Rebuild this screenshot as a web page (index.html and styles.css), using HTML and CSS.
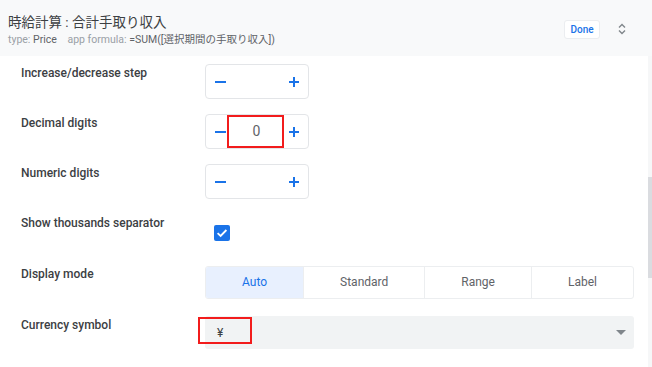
FILE: index.html
```html
<!DOCTYPE html>
<html lang="en">
<head>
    <meta charset="UTF-8">
    <meta name="viewport" content="width=device-width, initial-scale=1.0">
    <title>Column settings</title>
    <link rel="stylesheet" href="styles.css">
</head>
<body>
    <div class="panel">
        <div class="header">
            <div class="title-block">
                <div class="title">時給計算 : 合計手取り収入</div>
                <div class="subtitle">
                    <span class="key">type:</span> <span class="val">Price</span>
                    <span class="key spaced">app formula:</span> <span class="val">=SUM([選択期間の手取り収入])</span>
                </div>
            </div>
            <button class="done-btn" type="button">Done</button>
            <div class="collapse">
                <svg width="8" height="12" viewBox="0 0 8 12">
                    <path d="M1 4.5 L4 1.5 L7 4.5" fill="none" stroke="#80868b" stroke-width="1.4"/>
                    <path d="M1 7.5 L4 10.5 L7 7.5" fill="none" stroke="#80868b" stroke-width="1.4"/>
                </svg>
            </div>
        </div>

        <div class="content">
            <div class="row">
                <div class="label">Increase/decrease step</div>
                <div class="control">
                    <div class="stepper">
                        <span class="minus"></span>
                        <div class="step-input"></div>
                        <span class="plus"></span>
                    </div>
                </div>
            </div>
            <div class="row">
                <div class="label">Decimal digits</div>
                <div class="control">
                    <div class="stepper">
                        <span class="minus"></span>
                        <div class="step-input marked">0</div>
                        <span class="plus"></span>
                    </div>
                </div>
            </div>
            <div class="row">
                <div class="label">Numeric digits</div>
                <div class="control">
                    <div class="stepper">
                        <span class="minus"></span>
                        <div class="step-input"></div>
                        <span class="plus"></span>
                    </div>
                </div>
            </div>
            <div class="row">
                <div class="label">Show thousands separator</div>
                <div class="control check-wrap">
                    <span class="checkbox">
                        <svg width="16" height="16" viewBox="0 0 16 16">
                            <path d="M3.6 8.2 L6.6 11 L12.4 5" fill="none" stroke="#fff" stroke-width="1.8"/>
                        </svg>
                    </span>
                </div>
            </div>
            <div class="row">
                <div class="label">Display mode</div>
                <div class="control">
                    <div class="segments">
                        <div class="seg active">Auto</div>
                        <div class="seg">Standard</div>
                        <div class="seg">Range</div>
                        <div class="seg">Label</div>
                    </div>
                </div>
            </div>
            <div class="row">
                <div class="label">Currency symbol</div>
                <div class="control">
                    <div class="select">
                        <span class="select-value">¥</span>
                        <span class="arrow"></span>
                        <span class="mark-box"></span>
                    </div>
                </div>
            </div>
        </div>

        <div class="scrollbar"><div class="thumb"></div></div>
    </div>
</body>
</html>
```

FILE: styles.css
```css
body {
    margin: 0;
    padding: 0;
    font-family: Roboto, "Noto Sans CJK JP", sans-serif;
    color: #3c4043;
    background-color: #fff;
}
.panel {
    width: 652px;
    height: 367px;
    position: relative;
    overflow: hidden;
}
.header {
    height: 56px;
    background-color: #f8f9fa;
    display: flex;
    align-items: flex-start;
    padding: 0 8px;
    box-sizing: border-box;
}
.title-block {
    flex: 1;
    padding-top: 13px;
}
.title {
    font-size: 13.5px;
    line-height: 18px;
    color: #3c4043;
}
.subtitle {
    font-size: 10.5px;
    line-height: 14px;
    margin-top: 2px;
    white-space: nowrap;
}
.subtitle .key {
    color: #9aa0a6;
}
.subtitle .val {
    color: #5f6368;
}
.subtitle .spaced {
    margin-left: 8px;
}
.done-btn {
    margin-top: 20px;
    width: 36px;
    height: 19px;
    padding: 0;
    border: 1px solid #ebedf0;
    border-radius: 3px;
    background-color: #fff;
    color: #1a73e8;
    font-family: Roboto, sans-serif;
    font-size: 10px;
    font-weight: 500;
    box-sizing: border-box;
}
.collapse {
    width: 16px;
    margin: 23px 14px 0 14px;
    display: flex;
    justify-content: center;
}

.content {
    padding: 8px 18px 0 21px;
}
.row {
    display: flex;
    align-items: flex-start;
    margin-bottom: 15px;
}
.row:nth-child(5) {
    margin-bottom: 17px;
}
.label {
    width: 184px;
    padding-top: 1px;
    font-size: 12px;
    font-weight: 500;
    line-height: 16px;
    color: #3c4043;
    flex-shrink: 0;
}
.control {
    flex: 1;
}

.stepper {
    width: 104px;
    height: 35px;
    border: 1px solid #e3e5e8;
    border-radius: 4px;
    box-sizing: border-box;
    display: flex;
    align-items: center;
    padding: 0 9px;
}
.minus {
    width: 11px;
    height: 2px;
    background-color: #1a73e8;
    margin-right: 1px;
}
.plus {
    width: 10px;
    height: 10px;
    margin-left: 5px;
    position: relative;
}
.plus::before,
.plus::after {
    content: "";
    position: absolute;
    background-color: #1a73e8;
}
.plus::before {
    left: 0;
    top: 4px;
    width: 10px;
    height: 2px;
}
.plus::after {
    left: 4px;
    top: 0;
    width: 2px;
    height: 10px;
}
.step-input {
    width: 57px;
    height: 33px;
    box-sizing: border-box;
    display: flex;
    align-items: center;
    justify-content: center;
    font-size: 14px;
    color: #5f6368;
}
.step-input.marked {
    border: 2px solid #f21c1c;
    height: 33px;
    margin-top: -1px;
    padding-left: 2px;
}

.check-wrap {
    height: 36px;
    padding: 11px 0 0 9px;
    box-sizing: border-box;
}
.checkbox {
    display: block;
    width: 16px;
    height: 16px;
    border-radius: 2px;
    background-color: #1a73e8;
}
.checkbox svg {
    display: block;
}

.segments {
    display: flex;
    height: 33px;
    margin-top: 1px;
    border: 1px solid #eceef0;
    border-radius: 3px;
    box-sizing: border-box;
    overflow: hidden;
}
.seg {
    flex: 1 1 auto;
    display: flex;
    align-items: center;
    justify-content: center;
    padding-bottom: 1px;
    font-size: 12px;
    color: #5f6368;
    border-left: 1px solid #eceef0;
}
.seg:first-child {
    border-left: none;
}
.seg.active {
    background-color: #e8f0fe;
    color: #1a73e8;
}

.select {
    position: relative;
    height: 33px;
    background-color: #f1f3f4;
    border-radius: 3px;
    display: flex;
    align-items: center;
    padding: 0 8px 0 12px;
}
.select-value {
    flex: 1;
    font-size: 12px;
    color: #3c4043;
}
.arrow {
    width: 0;
    height: 0;
    border-left: 5px solid transparent;
    border-right: 5px solid transparent;
    border-top: 5px solid #80868b;
}
.mark-box {
    position: absolute;
    left: -7px;
    top: 1px;
    width: 54px;
    height: 27px;
    border: 2px solid #f21c1c;
    box-sizing: border-box;
}

.scrollbar {
    position: absolute;
    right: 0;
    top: 56px;
    width: 4px;
    bottom: 0;
    background-color: #f6f7f8;
}
.thumb {
    margin-top: 121px;
    height: 101px;
    background-color: #dadce0;
}
```
